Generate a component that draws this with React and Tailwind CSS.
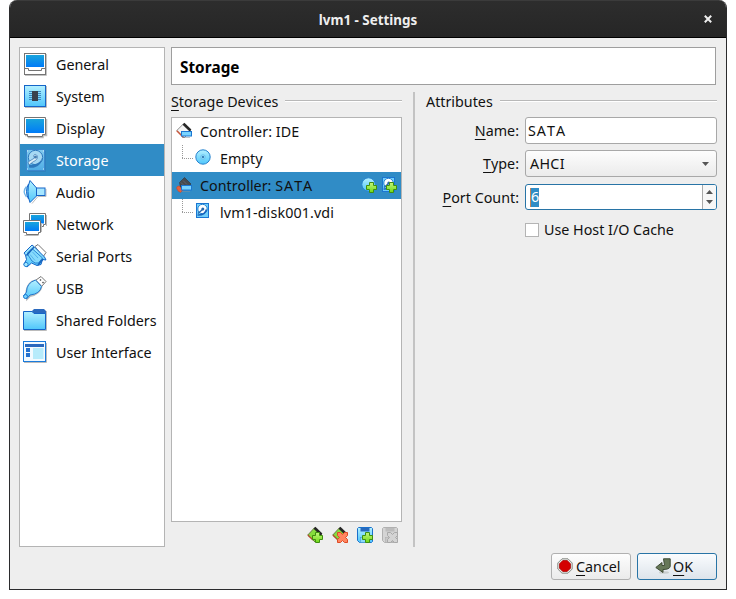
import React from "react";

const BLUE = "#1565c8";

function Defs() {
  return (
    <svg width="0" height="0" className="absolute">
      <defs>
        <linearGradient id="screen" x1="0" y1="0" x2="0" y2="1">
          <stop offset="0" stopColor="#19a5dc" />
          <stop offset="1" stopColor="#007bf8" />
        </linearGradient>
        <linearGradient id="cyan" x1="0" y1="0" x2="0" y2="1">
          <stop offset="0" stopColor="#b4f0ff" />
          <stop offset="1" stopColor="#4fc6fb" />
        </linearGradient>
        <linearGradient id="lime" x1="0" y1="0" x2="0" y2="1">
          <stop offset="0" stopColor="#c4f67c" />
          <stop offset="1" stopColor="#6fd916" />
        </linearGradient>
        <linearGradient id="faded" x1="0" y1="0" x2="0" y2="1">
          <stop offset="0" stopColor="#82caef" />
          <stop offset="1" stopColor="#4fade6" />
        </linearGradient>
      </defs>
    </svg>
  );
}

function Icon({ size = 24, className = "", children }) {
  return (
    <svg width={size} height={size} viewBox={`0 0 ${size} ${size}`} className={`block shrink-0 overflow-visible ${className}`}>
      {children}
    </svg>
  );
}

const GeneralIcon = () => (
  <Icon>
    <path d="M2 23.5H23.5V2" fill="none" stroke="#c4c4c4" />
    <rect x="1.5" y="1.5" width="21" height="21" fill="#fff" stroke="#747474" />
    <rect x="3" y="3" width="18" height="12" fill="url(#screen)" />
    <path d="M1 16.5H5.5V18.5H18.5V16.5H23" fill="none" stroke="#747474" />
  </Icon>
);
const SystemIcon = () => (
  <Icon>
    <path d="M2 23.5H23.5V2" fill="none" stroke="#bbb" />
    <rect x="1.5" y="1.5" width="21" height="21" fill="url(#cyan)" stroke={BLUE} />
    <path d="M6 7.5H18M6 9.5H18M6 11.5H18M6 13.5H18M6 15.5H18" stroke="#3c86c0" />
    <rect x="9" y="7" width="6" height="10" fill="#39404e" />
  </Icon>
);
const DisplayIcon = () => (
  <Icon>
    <path d="M2 19.5H5.5V21.5H20V19.5H23.5V3" fill="none" stroke="#bbb" strokeWidth="1.5" />
    <path d="M1.5 1.5H22.5V18.5H19.5V20.5H4.5V18.5H1.5Z" fill="#fff" stroke="#747474" />
    <rect x="3" y="3" width="18" height="14" fill="url(#screen)" />
  </Icon>
);
const StorageIcon = () => (
  <Icon>
    <rect x="3.5" y="1.5" width="18" height="21" fill="url(#faded)" stroke="#3a87cd" />
    <path d="M22.5 3V23.5H5" fill="none" stroke="#2f7cb8" opacity=".6" />
    <circle cx="12.5" cy="9.5" r="7.2" fill="#a6d9f3" stroke="#2d79bd" />
    <path d="M6 19.5C12 21 19.500 17 19 9.500C18 15 12 17 6 17Z" fill="#2d79bd" />
    <path d="M5 14 11.500 10C9.500 7 12 5.500 13.500 7C16 9 13.500 12.500 10.500 13.500L6 17Z" fill="#dceef8" stroke="#467fb5" strokeWidth=".8" />
    <circle cx="12.500" cy="9" r="1.500" fill="#447fb2" />
    <path d="M4 3h1M20 3h1M4 21h1M20 21h1" stroke="#d4edf8" />
  </Icon>
);
const AudioIcon = () => (
  <Icon>
    <path d="M3.500 6.500Q-1 11.500 3.500 17" fill="none" stroke="#6fb4e8" strokeWidth="1.300" />
    <path d="M5.500 4Q1.500 11.500 5.500 19Z" fill="#79dcff" stroke={BLUE} />
    <path d="M9 23.500 15 16.500H23V9" fill="none" stroke="#bdbdbd" />
    <path d="M7 .5 14 8.500V15.500L7 22.500Q4.500 17 5 11.500Q4.500 6 7 .5Z" fill="url(#cyan)" stroke={BLUE} />
    <rect x="13.500" y="8" width="8.500" height="7.500" fill="#a6e6ff" stroke={BLUE} />
  </Icon>
);
const NetworkIcon = () => (
  <Icon>
    <path d="M6.500 1.500H22.500V12.500H20.500V14.500H9.500V12.500H6.500Z" fill="#fff" stroke="#747474" />
    <rect x="8" y="3" width="13" height="8.500" fill="url(#screen)" />
    <path d="M1.500 23.500H15.500M18.500 20V11M23.500 3V14" fill="none" stroke="#bbb" />
    <path d="M.5 8.500H17.500V20.500H15.500V22.500H3.500V20.500H.5Z" fill="#fff" stroke="#747474" />
    <rect x="2" y="10" width="14" height="9" fill="url(#screen)" />
  </Icon>
);
const SerialIcon = () => (
  <Icon>
    <path d="M12 2.500 15 .5 23 8.500 20 13Z" fill="#fff" stroke="#777" />
    <path d="M1 9 9 1 11.500 3 21.500 13 23 16 19.500 15.500 18 20.500 14 21.500 8.500 19 4 23 .8 20.500 3.500 15.500 2.500 11Z" fill="url(#cyan)" stroke={BLUE} />
    <path d="M4.500 9 9 4.500 19.500 14 15.500 19Q12 20 9 17L5 11Z" fill="#86dafc" stroke="#2583d3" />
    <path d="M3.500 11.500 11 3M15 21 20 15" stroke="#1764bd" strokeWidth="1.600" />
    <path d="M7 10.500 12 16.500M9.500 8 15 14" stroke="#49a9e6" strokeWidth=".8" />
    <circle cx="3" cy="20.500" r="2.100" fill="#a6e9ff" stroke="#2583d3" />
  </Icon>
);
const UsbIcon = () => (
  <Icon>
    <path d="M13 4 18 .5 23 5.500 18.500 10.500Z" fill="#fff" stroke="#777" />
    <path d="m17 3.500 1 1M19.500 6l1 1" stroke="#555" strokeWidth="1.500" />
    <path d="M4 23 7 20Q17 18 18.500 10.500L12.500 4.500Q5 6 3.500 15Z" fill="none" stroke="#bdbdbd" strokeWidth="2" />
    <path d="M12.500 4 18.500 10.500Q17 18 7 19L3.500 23 .5 20 3.500 16Q3.500 7 12.500 4Z" fill="url(#cyan)" stroke="#2279cf" />
    <circle cx="2.500" cy="20.500" r="2" fill="#74d4ff" stroke="#2279cf" />
  </Icon>
);
const FolderIcon = () => (
  <Icon>
    <path d="M23.500 3V22.500H1" fill="none" stroke="#bbb" />
    <path d="M9 5V3L11 1H21L23 3V6H9Z" fill="#2a69be" />
    <path d="M.5 3.500H9L11 5.500H22.500V21.500H.5Z" fill="url(#cyan)" stroke={BLUE} />
  </Icon>
);
const UiIcon = () => (
  <Icon>
    <path d="M23.500 3V22.500H1" fill="none" stroke="#bbb" />
    <rect x=".5" y="1.500" width="22" height="20" fill="#f2faff" stroke="#1a7bdc" />
    <rect x="2" y="4" width="19" height="3" fill="#2a69be" />
    <rect x="3" y="8" width="4" height="4" fill="#2372d0" />
    <rect x="3" y="13" width="4" height="4" fill="#2372d0" />
    <rect x="10" y="8" width="10.500" height="11" fill="#b6ebfb" />
  </Icon>
);

const ControllerIcon = ({ dark }) => (
  <Icon size={16}>
    {dark ? (
      <>
        <path d="M.5 11Q1 8.500 3.500 9L7 13 4.500 15.500Q1.500 14.500 .5 11Z" fill="#e8603a" stroke="#c8472a" strokeWidth=".6" />
        <path d="M3.500 5.500 8.500 .5 15 7 12 10H4.500Z" fill="#454b50" stroke="#2d3338" strokeWidth=".6" />
        <path d="M5 5.500 8 8.500M7 3.500 11 7.500" stroke="#6a7075" strokeWidth=".7" />
      </>
    ) : (
      <>
        <path d="M.8 7.500 7.500 .8 15 8 8 15Z" fill="#f4f4f4" stroke="#8e8e8e" />
        <path d="M7.500 .8 14.500 7.500" stroke="#262626" strokeWidth="2.600" />
        <path d="M.8 7.800 7.500 14.500" stroke="#c8573c" strokeWidth="1.500" />
      </>
    )}
    <rect x="5.500" y="8.500" width="10" height="4.500" fill="#79d4ff" stroke="#1b76d2" />
    <path d="M6 14.500H14" stroke="#85919b" opacity=".5" />
  </Icon>
);
const DiscShape = () => (
  <>
    <circle cx="8" cy="8" r="7.200" fill="url(#cyan)" stroke="#2683d0" />
    <circle cx="8" cy="8" r="2.300" fill="#8edcfa" stroke="#64b9e6" strokeWidth=".7" />
    <circle cx="8" cy="8" r=".9" fill="#12569b" />
  </>
);
const DriveShape = () => (
  <>
    <rect x="1.500" y=".5" width="12" height="14" fill="#70cffb" stroke="#1b76d2" />
    <circle cx="7.500" cy="6" r="4.700" fill="#fff" stroke="#2681d0" />
    <path d="M2.500 12Q10 12.500 11.500 6.500" fill="none" stroke="#1a66bd" strokeWidth="1.600" />
    <path d="M3 10.500 7.500 6.500" stroke="#2768ab" strokeWidth="1.300" />
    <circle cx="7.800" cy="6" r="1.500" fill="#2768ab" />
  </>
);
const Plus = () => (
  <path d="M8.500 5.500H12.500V8.500H15.500V12.500H12.500V15.500H8.500V12.500H5.500V8.500H8.500Z" fill="url(#lime)" stroke="#3f8f10" />
);
const DiscIcon = () => <Icon size={16}><DiscShape /></Icon>;
const DriveIcon = () => <Icon size={16}><DriveShape /></Icon>;
const AddDiscIcon = () => <Icon size={16}><circle cx="7.500" cy="7.500" r="6.700" fill="url(#cyan)" stroke="#2683d0" /><Plus /></Icon>;
const AddDriveIcon = () => <Icon size={16}><DriveShape /><Plus /></Icon>;

const GreenCard = () => (
  <>
    <path d="M.8 8 7.500 .8 15 8 8 15Z" fill="#86dc3c" stroke="#6b7a45" />
    <path d="M7.500 .8 14.500 7.500" stroke="#252525" strokeWidth="2.600" />
    <path d="M.8 8 6 13" stroke="#b0502c" strokeWidth="1.300" />
  </>
);
const Cross = ({ gray }) => (
  <path
    d="M5.500 5.500H8.500L10.500 7.500 12.500 5.500H15.500V8.500L13.500 10.500 15.500 12.500V15.500H12.500L10.500 13.500 8.500 15.500H5.500V12.500L7.500 10.500 5.500 8.500Z"
    fill={gray ? "#d4d4d4" : "#ff8560"}
    stroke={gray ? "#a8a8a8" : "#de4a24"}
  />
);
const SaveShape = ({ gray }) => (
  <>
    <path d="M.5 1.500L1.500 .5H14.500L15.500 1.500V14.500L14.500 15.500H2.500L.5 13.500Z" fill={gray ? "#d4d4d4" : "url(#cyan)"} stroke={gray ? "#b0b0b0" : "#1b70cb"} />
    <rect x="3.500" y="1" width="9" height="3.500" fill={gray ? "#bcbcbc" : "#2869bd"} />
    <rect x="3.500" y="10.500" width="7" height="5" fill={gray ? "#c8c8c8" : "#8bdaf8"} stroke={gray ? "#b0b0b0" : "#4b99cf"} strokeWidth=".6" />
  </>
);

const categories = [
  ["General", GeneralIcon],
  ["System", SystemIcon],
  ["Display", DisplayIcon],
  ["Storage", StorageIcon],
  ["Audio", AudioIcon],
  ["Network", NetworkIcon],
  ["Serial Ports", SerialIcon],
  ["USB", UsbIcon],
  ["Shared Folders", FolderIcon],
  ["User Interface", UiIcon],
];

function Mnemonic({ text }) {
  return (
    <span>
      <span className="underline decoration-1 underline-offset-[3px]">{text[0]}</span>
      {text.slice(1)}
    </span>
  );
}

function Branch() {
  return (
    <svg width="11" height="27" className="ml-[10px] block shrink-0">
      <path d="M.5 0V14" stroke="#999" strokeDasharray="1 1" />
      <path d="M0 13.500H11" stroke="#999" strokeDasharray="1 1" />
    </svg>
  );
}

function GroupTitle({ text, plain }) {
  return (
    <div className="flex h-5 items-center gap-[7px]">
      <span className="whitespace-nowrap">{plain ? text : <Mnemonic text={text} />}</span>
      <span className="mb-[2px] h-[2px] flex-1 border-t border-[#b8b8b8] bg-white" />
    </div>
  );
}

export default function App() {
  return (
    <div className="flex h-[599px] w-[736px] justify-center bg-white font-['Noto_Sans','Open_Sans',sans-serif] text-[14.3px] leading-5 text-[#111] [font-kerning:none]">
      <Defs />
      <div className="flex h-[590px] w-[718px] flex-col overflow-hidden rounded-t-[8px] border-x border-b border-[#2b2b2d] bg-[#eee]">
        <header className="flex h-[38px] shrink-0 items-center border-t border-b border-t-[#3b3b3b] border-b-black bg-gradient-to-b from-[#2d2d2d] to-[#262626] text-[#eee]">
          <h1 className="flex-1 pt-px text-center text-[13.4px] font-bold">lvm1 - Settings</h1>
          <svg width="8" height="8" className="mr-[14px] -ml-[22px] block shrink-0">
            <path d="M.8.8 7.200 7.200M7.200.8.8 7.200" stroke="#eee" strokeWidth="2" />
          </svg>
        </header>

        <div className="flex h-[509px] shrink-0 gap-[6px] pl-[9px] pt-[9px]">
          <nav className="h-[500px] w-[146px] shrink-0 border border-[#b4b4b4] bg-white">
            {categories.map(([name, Glyph]) => (
              <div key={name} className={`flex h-8 items-center pl-[3px] ${name === "Storage" ? "bg-[#308cc6] text-white" : ""}`}>
                <Glyph />
                <span className="ml-[9px] pt-[2px] whitespace-nowrap">{name}</span>
              </div>
            ))}
          </nav>

          <div className="flex w-[546px] flex-col">
            <h2 className="flex h-[38px] w-[545px] shrink-0 items-center border border-[#9e9e9e] bg-white pl-2 pt-[2px] text-[15.3px] font-bold text-black">Storage</h2>

            <div className="flex flex-1 pt-[7px]">
              <section className="flex w-[231px] flex-col">
                <GroupTitle text="Storage Devices" />
                <div className="mt-[5px] h-[405px] border border-[#b4b4b4] bg-white">
                  <div className="flex h-[27px] items-center pl-1">
                    <span className="mb-[2px]"><ControllerIcon /></span>
                    <span className="ml-2 tracking-[0.06px]">Controller: IDE</span>
                  </div>
                  <div className="flex h-[27px] items-center">
                    <Branch />
                    <span className="ml-[2px] mb-[3px]"><DiscIcon /></span>
                    <span className="ml-[9px]">Empty</span>
                  </div>
                  <div className="flex h-[27px] items-center bg-[#308cc6] pl-1 pr-[3px]">
                    <span className="mb-[2px]"><ControllerIcon dark /></span>
                    <span className="ml-2 flex-1">Controller: <span className="tracking-[1px]">SATA</span></span>
                    <span className="mb-[2px] flex gap-1 pr-[1px]">
                      <AddDiscIcon />
                      <AddDriveIcon />
                    </span>
                  </div>
                  <div className="flex h-[27px] items-center">
                    <Branch />
                    <span className="ml-[2px] mb-[3px]"><DriveIcon /></span>
                    <span className="ml-[9px] tracking-[0.12px]">lvm1-disk001.vdi</span>
                  </div>
                </div>
                <div className="mt-[5px] flex gap-[9px] pl-[136px]">
                  <Icon size={16}><GreenCard /><Plus /></Icon>
                  <Icon size={16}><GreenCard /><Cross /></Icon>
                  <Icon size={16}><SaveShape /><Plus /></Icon>
                  <Icon size={16}><SaveShape gray /><Cross gray /></Icon>
                </div>
              </section>

              <div className="ml-[11px] w-[2px] bg-[#c3c3c3]" />

              <section className="ml-[11px] w-[291px]">
                <GroupTitle text="Attributes" plain />
                <div className="mt-[5px] grid grid-cols-[93px_192px] gap-x-[6px]">
                  <label className="flex h-[27px] items-center justify-end"><Mnemonic text="Name:" /></label>
                  <div className="flex h-[27px] items-center rounded-[3px] border border-[#a8a8a8] bg-white pl-[2px] tracking-[1px]">SATA</div>

                  <label className="mt-[6px] flex h-[27px] items-center justify-end"><Mnemonic text="Type:" /></label>
                  <div className="mt-[6px] flex h-[27px] items-center justify-between rounded-[3px] border border-[#a8a8a8] bg-gradient-to-b from-[#fdfdfd] to-[#ebebeb] pl-1 pr-[7px]">
                    <span className="tracking-[0.3px]">AHCI</span>
                    <svg width="7" height="4" className="block"><path d="M0 0H7L3.500 4Z" fill="#555" /></svg>
                  </div>

                  <label className="mt-[7px] flex h-[27px] items-center justify-end"><Mnemonic text="Port Count:" /></label>
                  <div className="mt-[7px] flex h-[26px] items-center overflow-hidden rounded-[3px] border border-[#2874a6] bg-white pl-1">
                    <span className="flex h-[19px] w-[9px] items-center border-l border-[#c88357] bg-[#308cc6] text-white">6</span>
                    <span className="ml-auto flex h-full w-[14px] flex-col items-center justify-center gap-[6px] border-l border-[#aaa] bg-[#f7f7f7]">
                      <svg width="7" height="4" className="block"><path d="M0 4H7L3.500 0Z" fill="#555" /></svg>
                      <svg width="7" height="4" className="block"><path d="M0 0H7L3.500 4Z" fill="#555" /></svg>
                    </span>
                  </div>

                  <div className="col-start-2 mt-[9px] flex h-5 items-center">
                    <span className="h-[14px] w-[14px] border border-[#b4b4b4] bg-white" />
                    <span className="ml-[5px]">Use Host I/O Cache</span>
                  </div>
                </div>
              </section>
            </div>
          </div>
        </div>

        <footer className="mt-[6px] flex justify-end gap-[6px] pr-[9px]">
          <button className="flex h-[27px] w-[80px] items-center rounded-[3px] border border-[#b0b0b0] bg-gradient-to-b from-[#fdfdfd] to-[#ebebeb] pl-[5px]">
            <Icon size={16} className="-mt-[2px]">
              <path d="M5 .8H11L15.200 5V11L11 15.200H5L.8 11V5Z" fill="#e8e8e5" stroke="#888a85" />
              <path d="M5.800 2.500H10.200L13.500 5.800V10.200L10.200 13.500H5.800L2.500 10.200V5.800Z" fill="#d40000" stroke="#a40000" strokeWidth=".7" />
            </Icon>
            <span className="ml-[3px]"><Mnemonic text="Cancel" /></span>
          </button>
          <button className="flex h-[27px] w-[80px] items-center rounded-[3px] border border-[#2874a6] bg-gradient-to-b from-[#fafcfe] to-[#dde4eb] pl-[17px]">
            <Icon size={16} className="-mt-[2px]">
              <ellipse cx="9" cy="14.500" rx="5" ry="1.200" fill="#9aa09a" opacity=".4" />
              <path d="M8.500.8H15.200V8.500Q14.500 11.500 8 11.500V14.500L.8 9.500 7 4.500V7.500H9.500Z" fill="#667858" stroke="#3e4b35" />
            </Icon>
            <span className="ml-[2px]"><Mnemonic text="OK" /></span>
          </button>
        </footer>
      </div>
    </div>
  );
}
